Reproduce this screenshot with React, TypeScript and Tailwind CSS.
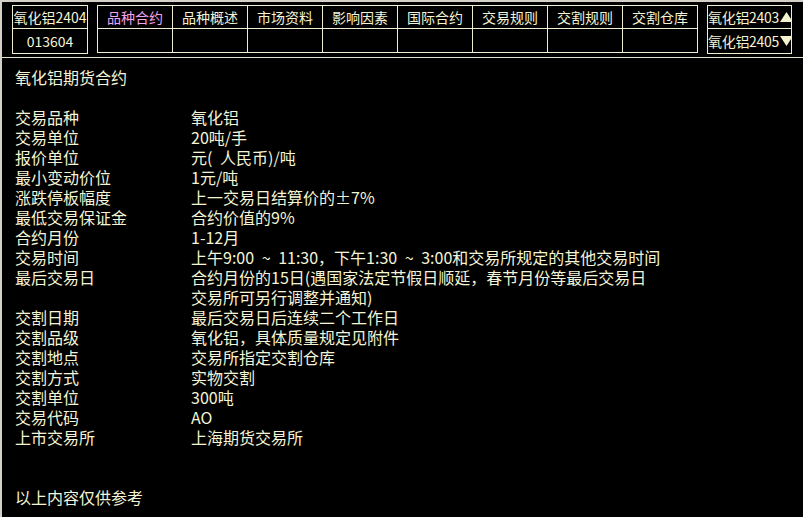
import type { JSX } from 'react'

const tabs = ['品种合约', '品种概述', '市场资料', '影响因素', '国际合约', '交易规则', '交割规则', '交割仓库']

const rows: [string, string[]][] = [
  ['交易品种', ['氧化铝']],
  ['交易单位', ['20吨/手']],
  ['报价单位', ['元( 人民币)/吨']],
  ['最小变动价位', ['1元/吨']],
  ['涨跌停板幅度', ['上一交易日结算价的±7%']],
  ['最低交易保证金', ['合约价值的9%']],
  ['合约月份', ['1-12月']],
  ['交易时间', ['上午9:00 ~ 11:30，下午1:30 ~ 3:00和交易所规定的其他交易时间']],
  ['最后交易日', ['合约月份的15日(遇国家法定节假日顺延，春节月份等最后交易日', '交易所可另行调整并通知)']],
  ['交割日期', ['最后交易日后连续二个工作日']],
  ['交割品级', ['氧化铝，具体质量规定见附件']],
  ['交割地点', ['交易所指定交割仓库']],
  ['交割方式', ['实物交割']],
  ['交割单位', ['300吨']],
  ['交易代码', ['AO']],
  ['上市交易所', ['上海期货交易所']],
]

function Triangle({ up }: { up: boolean }) {
  return (
    <svg width="13" height="10" viewBox="0 0 13 10" className="ml-[1px] shrink-0">
      <polygon points={up ? '6.5,0 13,10 0,10' : '0,0 13,0 6.5,10'} fill="#f4f4d0" />
    </svg>
  )
}

export default function App(): JSX.Element {
  return (
    <div className="h-[517px] w-[803px] overflow-hidden border-l-2 border-t-2 border-[#d4d0c8] bg-black font-['Noto_Sans_CJK_SC',sans-serif] text-[#f4f4d6]">
      {/* header strip */}
      <div className="flex h-[56px] items-start border-b border-[#e4e4cc] pl-[10px] pt-[3px] text-[14px] leading-none">
        <div className="grid w-[76px] grid-rows-[23px_24px] border border-[#f0f0d0]">
          <div className="flex items-center justify-center whitespace-nowrap border-b border-[#f0f0d0]">
            氧化铝2404
          </div>
          <div className="flex items-center justify-center">013604</div>
        </div>

        <div className="ml-[9px] grid grid-cols-[repeat(8,75px)] grid-rows-[23px_24px] border-l border-t border-[#f0f0d0]">
          {tabs.map((t, i) => (
            <div
              key={t}
              className={
                i === 0
                  ? 'flex items-center justify-center border-b border-r border-[#f0f0d0] text-[#f0a4f0]'
                  : 'flex items-center justify-center border-b border-r border-[#f0f0d0]'
              }
            >
              {t}
            </div>
          ))}
          {tabs.map((t) => (
            <div key={t + '-2'} className="border-b border-r border-[#f0f0d0]" />
          ))}
        </div>

        <div className="ml-[9px] grid w-[85px] grid-rows-[23px_24px] overflow-hidden border border-[#f0f0d0]">
          <div className="flex items-center whitespace-nowrap border-b border-[#f0f0d0] tracking-[-0.3px]">
            氧化铝2403
            <Triangle up />
          </div>
          <div className="flex items-center whitespace-nowrap tracking-[-0.3px]">
            氧化铝2405
            <Triangle up={false} />
          </div>
        </div>
      </div>

      {/* contract text */}
      <div className="pl-[13px] pt-[9px] text-[16px] leading-[20px]">
        <div>氧化铝期货合约</div>
        <div className="h-[20px]" />
        {rows.map(([label, value]) => (
          <div key={label} className="grid grid-cols-[176px_1fr]">
            <div>{label}</div>
            <div className="whitespace-pre [word-spacing:4px]">
              {value.map((line) => (
                <div key={line}>{line}</div>
              ))}
            </div>
          </div>
        ))}
        <div className="h-[40px]" />
        <div>以上内容仅供参考</div>
      </div>
    </div>
  )
}
